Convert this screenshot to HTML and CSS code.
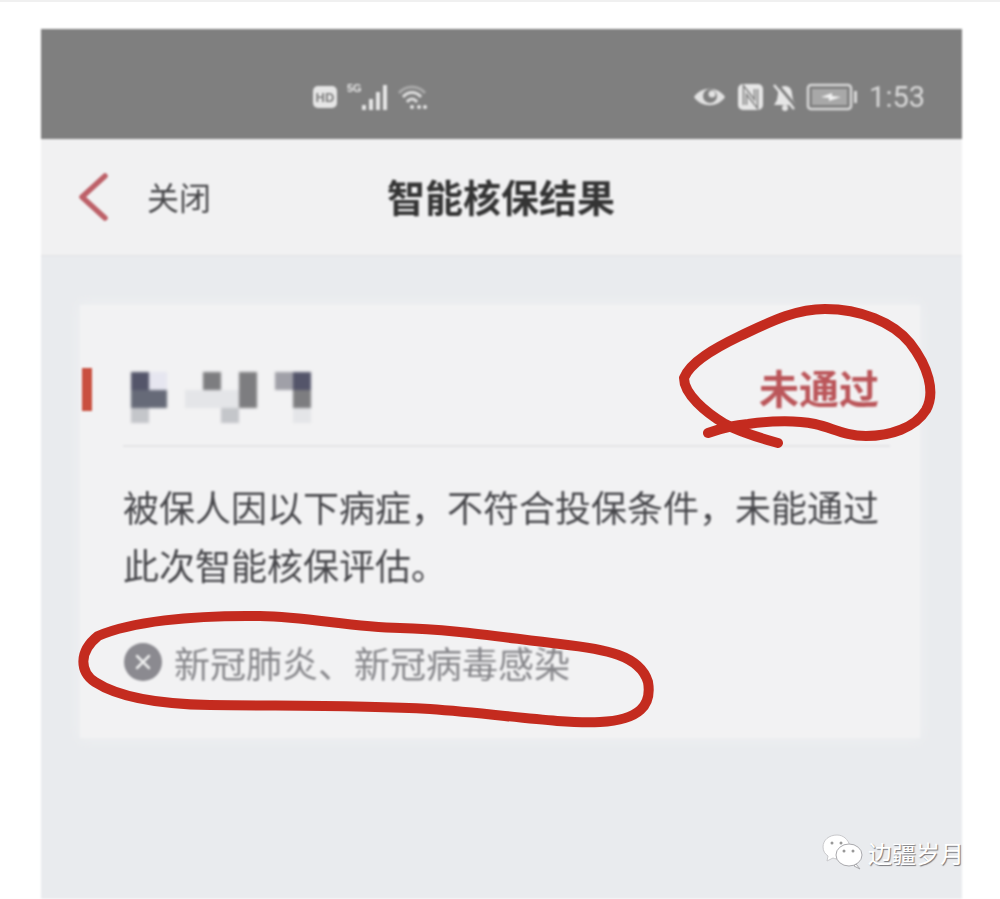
FILE: index.html
```html
<!DOCTYPE html>
<html lang="zh-CN">
<head>
  <meta charset="UTF-8">
  <meta name="viewport" content="width=device-width, initial-scale=1.0">
  <title>智能核保结果</title>
  <link rel="stylesheet" href="styles.css">
</head>
<body>

  <div class="phone">
    <div class="statusbar">
      <div class="status-left">
        <svg width="26" height="24" viewBox="0 0 26 24">
          <rect x="1" y="1" width="24" height="22" rx="5" fill="#e6e6e6"/>
          <text x="13" y="17" text-anchor="middle" class="hd-text">HD</text>
        </svg>
        <span class="net">5G</span>
        <svg class="signal" width="30" height="30" viewBox="0 0 30 30" fill="#e6e6e6">
          <rect x="1" y="23" width="4" height="5"/>
          <rect x="8" y="17" width="4" height="11"/>
          <rect x="15" y="10" width="4" height="18"/>
          <rect x="22" y="3" width="4" height="25"/>
        </svg>
        <svg class="wifi" width="32" height="28" viewBox="0 0 32 28" fill="none" stroke="#dcdcdc" stroke-width="3">
          <path d="M2 10C9 2 21 2 28 10" stroke="#a9a9a9"/>
          <path d="M6 14C11 8 19 8 24 14"/>
          <path d="M10 19C13 15 17 15 20 19"/>
          <circle cx="15" cy="24" r="2" fill="#e6e6e6" stroke="none"/>
          <circle cx="22" cy="24" r="2" fill="#e6e6e6" stroke="none"/>
          <circle cx="28" cy="24" r="2" fill="#e6e6e6" stroke="none"/>
        </svg>
      </div>
      <div class="status-right">
        <svg class="eye" width="33" height="24" viewBox="0 0 33 24">
          <path d="M1 12C8 1 25 1 32 12C25 23 8 23 1 12Z" fill="#e2e2e2"/>
          <circle cx="17" cy="11" r="7" fill="#7f7f7f"/>
          <circle cx="19" cy="9" r="3.5" fill="#e2e2e2"/>
        </svg>
        <svg width="27" height="28" viewBox="0 0 27 28">
          <rect x="1" y="1" width="25" height="26" rx="5" fill="#e6e6e6"/>
          <path d="M8 22V7L19 21V6" fill="none" stroke="#7f7f7f" stroke-width="4.5"/>
          <path d="M8 22V7L19 21V6" fill="none" stroke="#e6e6e6" stroke-width="1.5"/>
        </svg>
        <svg width="26" height="28" viewBox="0 0 26 28" fill="#e6e6e6">
          <path d="M13 3C8 3 6 7 6 11L5 17L2 22H24L21 17L20 11C20 7 18 3 13 3Z"/>
          <path d="M5 1L25 25" stroke="#7f7f7f" stroke-width="3"/>
          <path d="M2 2L22 26" stroke="#e6e6e6" stroke-width="2.5"/>
          <circle cx="13" cy="25" r="3"/>
        </svg>
        <svg class="battery" width="52" height="28" viewBox="0 0 52 28">
          <rect x="2" y="2" width="43" height="24" rx="3" fill="none" stroke="#d8d8d8" stroke-width="2.5"/>
          <rect x="6" y="6" width="35" height="16" fill="#a8a8a8"/>
          <path d="M15 14L26 10V13L35 14L23 18V15Z" fill="#f2f2f2"/>
          <rect x="48" y="8" width="3" height="12" fill="#d8d8d8"/>
        </svg>
        <span class="time">1:53</span>
      </div>
    </div>

    <div class="navbar">
      <svg class="back" width="30" height="48" viewBox="0 0 30 48" fill="none" stroke="#bd6068" stroke-width="5.5" stroke-linecap="round" stroke-linejoin="round">
        <path d="M26 3L3 24L26 45"/>
      </svg>
      <span class="close">关闭</span>
      <h1 class="page-title">智能核保结果</h1>
    </div>

    <div class="content">
      <div class="card">
        <div class="card-head">
          <div class="mark"></div>
          <div class="mosaic">
            <i class="s1"></i><i class="s0"></i><i></i><i></i><i class="s3"></i><i></i><i class="s3"></i><i></i><i class="s4"></i><i class="s1"></i>
            <i class="s2"></i><i class="s2"></i><i></i><i class="s5"></i><i class="s5"></i><i class="s5"></i><i class="s3"></i><i></i><i></i><i class="s3"></i>
            <i class="s6"></i><i></i><i></i><i></i><i></i><i class="s6"></i><i></i><i></i><i></i><i class="s5"></i>
          </div>
          <span class="result">未通过</span>
        </div>
        <div class="card-body">
          <p class="reason">被保人因以下病症&#65292;不符合投保条件&#65292;未能通过此次智能核保评估。</p>
          <div class="tag">
            <svg width="38" height="38" viewBox="0 0 38 38">
              <circle cx="19" cy="19" r="19" fill="#8b8a90"/>
              <path d="M13 13L25 25M25 13L13 25" stroke="#eee" stroke-width="2.5" stroke-linecap="round"/>
            </svg>
            <span>新冠肺炎、新冠病毒感染</span>
          </div>
        </div>
      </div>
    </div>
  </div>

  <!-- 红笔圈注 -->
  <svg class="ink" width="1000" height="899" viewBox="0 0 1000 899" fill="none" stroke="#c42b1f" stroke-width="10" stroke-linecap="round" stroke-linejoin="round">
    <path d="M708 433C722 428 735 425 748 424C770 421 795 420 815 424C833 428 845 436 866 436C890 436 915 428 926 410C936 392 928 366 910 343C893 322 860 309 825 309C795 309 770 322 740 336C715 348 690 362 684 378C684 394 705 412 725 424C740 432 760 438 778 443"/>
    <path d="M98 636C130 622 190 615 260 616C310 617 350 627 400 628C450 629 500 637 560 644C605 649 640 655 648 682C652 705 640 720 600 722C560 724 500 714 430 709C360 705 290 706 210 705C150 704 115 695 95 682C80 672 78 652 98 636Z"/>
  </svg>

  <div class="watermark">
    <svg width="42" height="36" viewBox="0 0 42 36">
      <path d="M15 1C7 1 1 6 1 13C1 17 3 20 6 22L5 27L11 24C13 25 16 25 18 25L28 12C26 5 21 1 15 1Z" fill="#fff" stroke="#c9c9cc"/>
      <ellipse cx="27" cy="21" rx="13" ry="11" fill="#fff" stroke="#a9a9ad"/>
      <path d="M34 30L38 35L32 32Z" fill="#fff" stroke="#a9a9ad"/>
      <circle cx="10" cy="9" r="1.5" fill="#999"/>
      <circle cx="19" cy="9" r="1.5" fill="#999"/>
      <circle cx="22" cy="17" r="1.5" fill="#999"/>
      <circle cx="31" cy="17" r="1.5" fill="#999"/>
    </svg>
    <span>边疆岁月</span>
  </div>

</body>
</html>
```

FILE: styles.css
```css
html, body {
  margin: 0;
  height: 899px;
  overflow: hidden;
}
body {
  position: relative;
  background: #fff;
  border-top: 2px solid #f0f0f0;
  box-sizing: border-box;
  font-family: "Liberation Sans", "Noto Sans CJK SC", sans-serif;
}
.phone {
  margin: 27px 38px 0 41px;
  height: 870px;
  display: flex;
  flex-direction: column;
  filter: blur(0.8px);
}
.statusbar {
  height: 110px;
  flex: none;
  box-sizing: border-box;
  background: #7f7f7f;
  display: flex;
  align-items: center;
  justify-content: space-between;
  padding: 26px 37px 0 271px;
}
.status-left, .status-right {
  display: flex;
  align-items: center;
}
.status-right {
  gap: 8px;
}
.eye {
  margin-right: 3px;
}
.hd-text {
  font-size: 13px;
  font-weight: bold;
  fill: #7f7f7f;
}
.net {
  font-size: 11px;
  font-weight: bold;
  color: #e6e6e6;
  margin: -18px 0 0 9px;
}
.signal {
  margin-left: -1px;
}
.wifi {
  margin-left: 6px;
}
.time {
  font-family: Roboto, sans-serif;
  font-size: 29px;
  color: #d8d8d8;
  margin-left: 3px;
}
.navbar {
  height: 117px;
  flex: none;
  box-sizing: border-box;
  background: #f1f1f2;
  border-bottom: 1px solid #e2e2e4;
  display: flex;
  align-items: center;
  padding: 3px 0 0 38px;
}
.back {
  flex: none;
  margin-top: -4px;
}
.close {
  font-size: 32px;
  color: #47474a;
  margin-left: 38px;
  line-height: 1;
}
.page-title {
  margin: 0 0 0 176px;
  font-size: 38px;
  line-height: 1;
  font-weight: bold;
  color: #343434;
}
.content {
  flex: 1;
  background: #e9ebee;
  padding: 49px 42px 0 39px;
}
.card {
  height: 433px;
  box-sizing: border-box;
  background: #f2f2f3;
  box-shadow: 0 0 12px 1px #f0f1f2;
  padding-top: 63px;
}
.card-head {
  height: 79px;
  display: flex;
  align-items: flex-start;
  position: relative;
}
.card-head::after {
  content: "";
  position: absolute;
  left: 43px;
  right: 30px;
  bottom: 0;
  border-bottom: 2px solid #e4e4e6;
}
.mark {
  width: 10px;
  height: 43px;
  margin-left: 2px;
  background: #c9503f;
}
.mosaic {
  margin: 4px 0 0 39px;
  display: grid;
  grid-template-columns: repeat(10, 18px);
  grid-template-rows: 18px 18px 15px;
  filter: blur(0.8px);
}
.mosaic i {
  display: block;
}
.mosaic .s0 { background: #e6e6f0; }
.mosaic .s1 { background: #54556a; }
.mosaic .s2 { background: #666a78; }
.mosaic .s3 { background: #7d7d80; }
.mosaic .s4 { background: #a0a0a8; }
.mosaic .s5 { background: #e4e5e8; }
.mosaic .s6 { background: #c4c6ca; }
.result {
  margin: -2px 41px 0 auto;
  font-size: 40px;
  line-height: 48px;
  font-weight: bold;
  color: #bb565a;
}
.card-body {
  padding: 34px 40px 0 43px;
}
.reason {
  margin: 0;
  font-size: 36px;
  line-height: 58px;
  color: #47474b;
}
.tag {
  margin-top: 36px;
  height: 58px;
  display: flex;
  align-items: center;
  gap: 12px;
  padding-left: 1px;
  font-size: 36px;
  color: #87878b;
}
.ink {
  position: absolute;
  left: 0;
  top: -2px;
  filter: blur(0.5px);
}
.watermark {
  position: absolute;
  left: 822px;
  top: 832px;
  display: flex;
  align-items: center;
  gap: 4px;
  font-size: 24px;
  color: #fff;
  text-shadow: 1px 1px 1px #77777c;
}
```
